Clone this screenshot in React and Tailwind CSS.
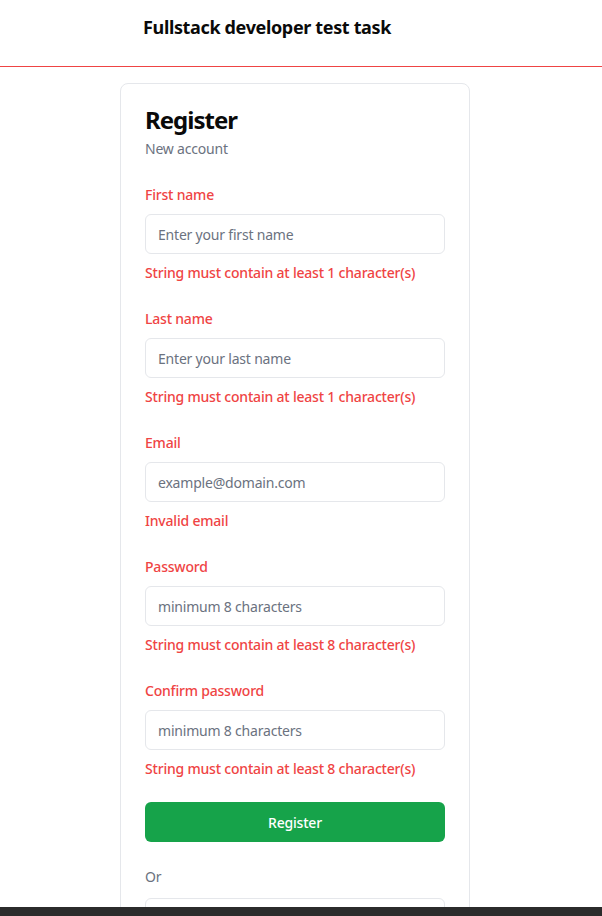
import React from "react";

const fields = [
  { label: "First name", placeholder: "Enter your first name", error: "String must contain at least 1 character(s)" },
  { label: "Last name", placeholder: "Enter your last name", error: "String must contain at least 1 character(s)" },
  { label: "Email", placeholder: "example@domain.com", error: "Invalid email" },
  { label: "Password", placeholder: "minimum 8 characters", error: "String must contain at least 8 character(s)", type: "password" },
  { label: "Confirm password", placeholder: "minimum 8 characters", error: "String must contain at least 8 character(s)", type: "password" },
];

export default function App() {
  return (
    <div className="min-h-screen bg-white text-black" style={{ fontFamily: '"Noto Sans", "Open Sans", sans-serif' }}>
      <header className="h-[67px] border-b border-[#ef4444] pr-3 flex justify-center">
        <div className="w-[350px] pl-[23px] pt-[13px]">
          <h1 className="text-[18px] leading-7 font-bold tracking-[-0.35px] text-[#0a0a0a]">Fullstack developer test task</h1>
        </div>
      </header>
      <main className="pr-3 flex justify-center">
        <div className="mt-4 w-[350px] rounded-lg border border-[#e5e7eb] bg-white">
          <div className="p-6">
            <h2 className="text-2xl leading-none font-bold tracking-[-1px] text-[#0a0a0a]">Register</h2>
            <p className="mt-1.5 h-5 text-sm leading-[22px] tracking-[-0.2px] text-[#6b7280]">New account</p>
          </div>
          <div className="px-6 pb-6">
            <div className="flex flex-col gap-6">
              {fields.map((f) => (
                <div key={f.label} className="flex flex-col">
                  <label className="h-5 text-sm leading-[26px] font-medium tracking-[-0.2px] text-[#ef4444]">{f.label}</label>
                  <input
                    type={f.type || "text"}
                    placeholder={f.placeholder}
                    className="mt-3 h-10 w-full rounded-md border border-[#e5e7eb] px-3 text-sm tracking-[-0.2px] text-black placeholder:text-[#6b7280] outline-none"
                  />
                  <p className="mt-2 h-5 text-sm leading-[22px] font-medium tracking-[-0.2px] text-[#ef4444]">{f.error}</p>
                </div>
              ))}
              <button className="h-10 w-full rounded-md bg-[#16a34a] pt-0.5 text-sm font-medium tracking-[-0.2px] text-white">Register</button>
              <p className="h-5 text-sm leading-[22px] tracking-[-0.2px] text-[#6b7280]">Or</p>
            </div>
            <button className="mt-3 h-10 w-full rounded-md border border-[#e5e7eb] text-sm font-medium text-black">Login</button>
          </div>
        </div>
      </main>
      <div className="fixed bottom-0 left-0 right-0 h-[9px] bg-[#2b2b2b]" />
    </div>
  );
}
